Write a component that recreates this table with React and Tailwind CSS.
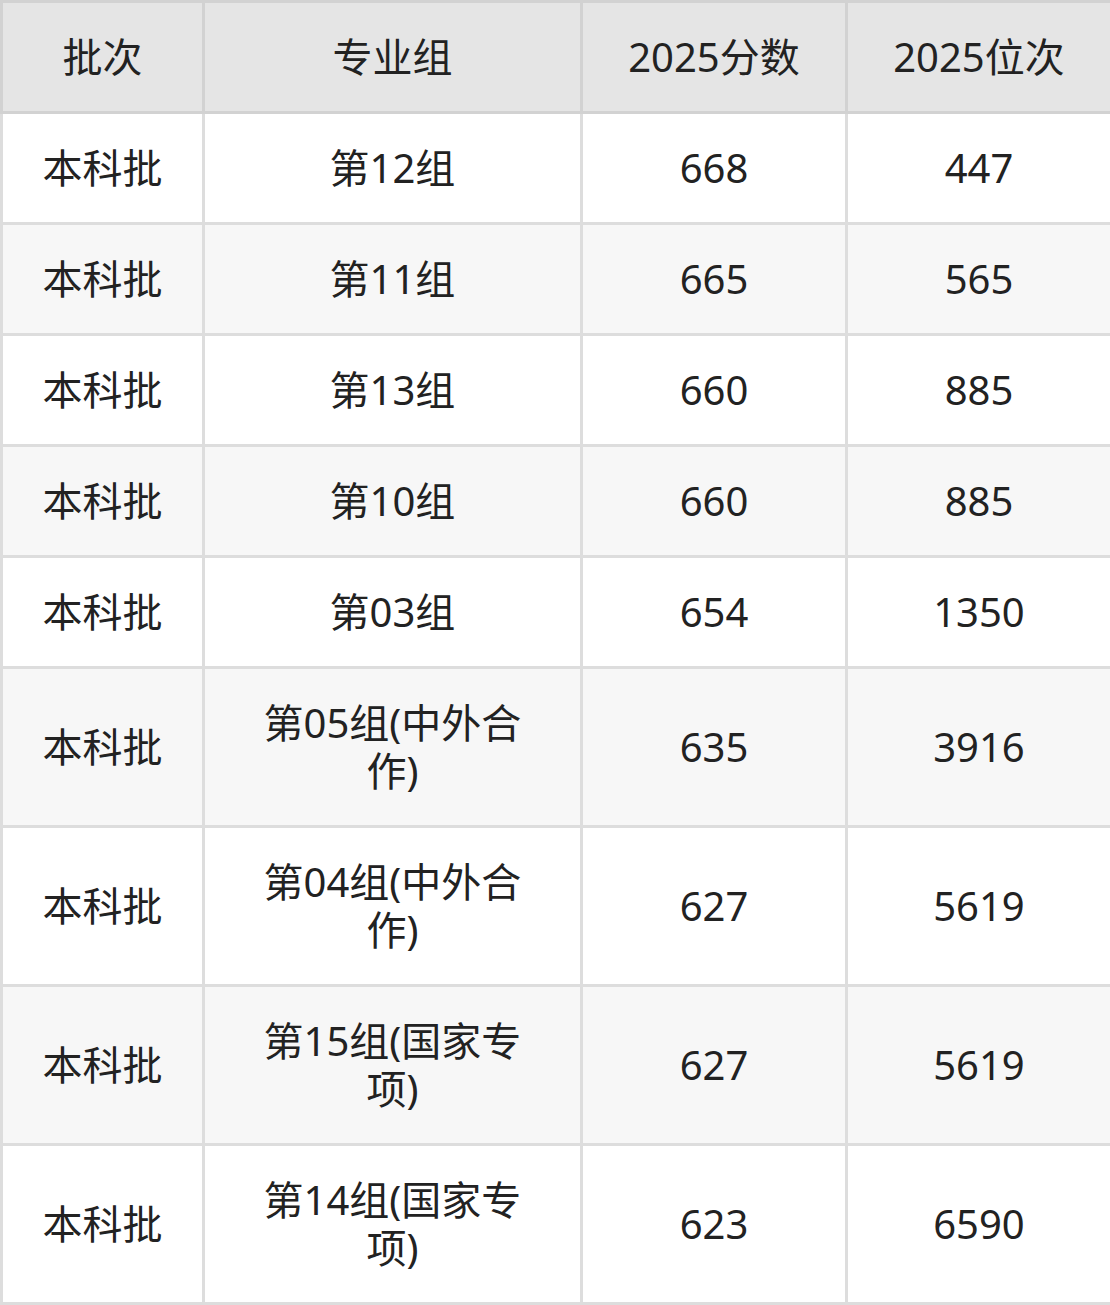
import React from "react";

// 分数线表格
const rows = [
  { pici: "本科批", zu: "第12组", fen: "668", wei: "447" },
  { pici: "本科批", zu: "第11组", fen: "665", wei: "565" },
  { pici: "本科批", zu: "第13组", fen: "660", wei: "885" },
  { pici: "本科批", zu: "第10组", fen: "660", wei: "885" },
  { pici: "本科批", zu: "第03组", fen: "654", wei: "1350" },
  { pici: "本科批", zu: "第05组(中外合作)", fen: "635", wei: "3916" },
  { pici: "本科批", zu: "第04组(中外合作)", fen: "627", wei: "5619" },
  { pici: "本科批", zu: "第15组(国家专项)", fen: "627", wei: "5619" },
  { pici: "本科批", zu: "第14组(国家专项)", fen: "623", wei: "6590" },
];

export default function App() {
  return (
    <div
      className="w-[1110px] bg-white text-[#222]"
      style={{ fontFamily: '"Noto Sans", "Noto Sans CJK SC", sans-serif' }}
    >
      <table className="w-full table-fixed border-collapse text-[40px] leading-[48px] text-center">
        <colgroup>
          <col className="w-[202px]" />
          <col className="w-[378px]" />
          <col className="w-[265px]" />
          <col className="w-[265px]" />
        </colgroup>
        <thead>
          <tr className="bg-[#e5e5e5]">
            {["批次", "专业组", "2025分数", "2025位次"].map((h) => (
              <th
                key={h}
                className="border-[3px] border-[#d2d2d2] px-[10px] py-[30px] font-normal"
              >
                {h}
              </th>
            ))}
          </tr>
        </thead>
        <tbody>
          {rows.map((r, i) => (
            <tr key={i} className={i % 2 === 0 ? "bg-white" : "bg-[#f7f7f7]"}>
              <td className="border-[3px] border-[#dddddd] px-[10px] py-[30px]">{r.pici}</td>
              <td className="border-[3px] border-[#dddddd] px-[50px] py-[30px]">{r.zu}</td>
              <td className="border-[3px] border-[#dddddd] px-[10px] py-[30px]">{r.fen}</td>
              <td className="border-[3px] border-[#dddddd] px-[10px] py-[30px]">{r.wei}</td>
            </tr>
          ))}
        </tbody>
      </table>
    </div>
  );
}
